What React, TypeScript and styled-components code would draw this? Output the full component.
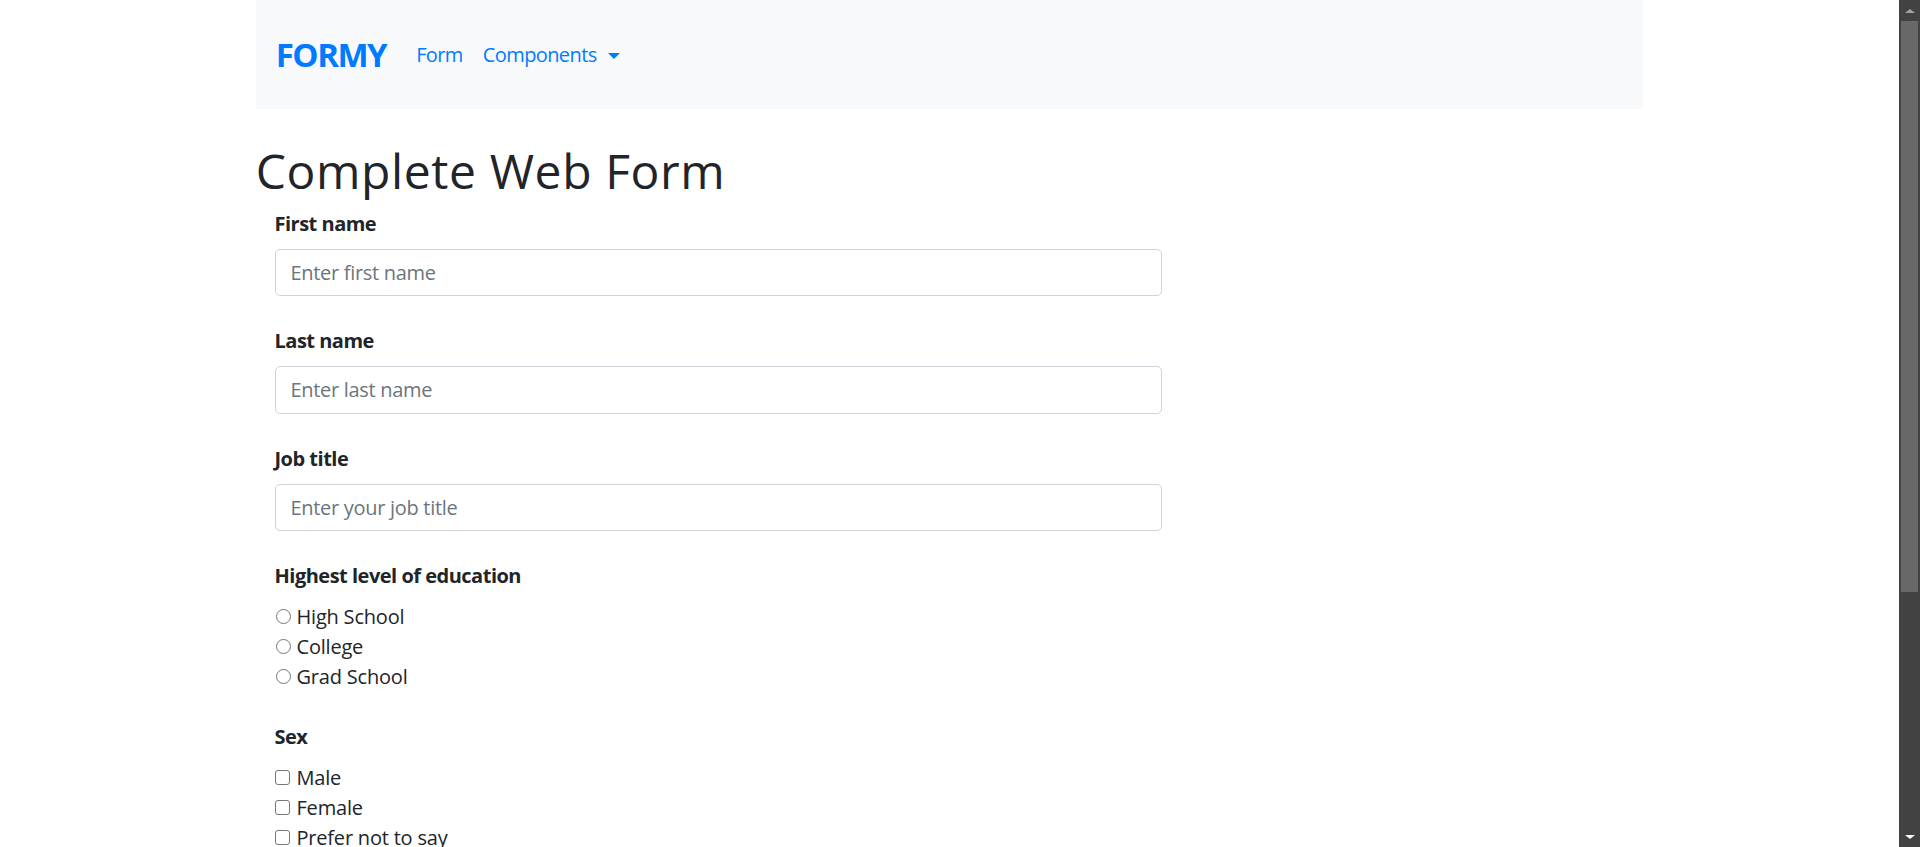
import React from 'react';
import styled, { createGlobalStyle } from 'styled-components';

const GlobalStyle = createGlobalStyle`
  body {
    margin: 0;
    font-family: "Open Sans", "Noto Sans", sans-serif;
    color: #212529;
    background: #fff;
  }
  *, *::before, *::after { box-sizing: border-box; }
  ::-webkit-scrollbar { width: 0; height: 0; }
`;

const Page = styled.div`
  margin-right: 21px;
`;

const Container = styled.div`
  max-width: 1425px;
  margin: 0 auto;
  padding: 0 18.75px 25px;
`;

const Navbar = styled.nav`
  display: flex;
  align-items: center;
  height: 109px;
  padding: 0 20px;
  background: #f8f9fa;
`;

const Brand = styled.a`
  font-size: 33px;
  font-weight: 700;
  letter-spacing: -1.5px;
  color: #007bff;
  line-height: 1.5;
  margin-right: 20px;
  text-decoration: none;
`;

const NavLink = styled.a`
  display: inline-flex;
  align-items: center;
  font-size: 20px;
  line-height: 30px;
  letter-spacing: -0.6px;
  padding: 0 10px;
  color: #007bff;
  text-decoration: none;
`;

const Caret = styled.span`
  display: inline-block;
  margin-left: 11px;
  margin-top: 2px;
  border-top: 6px solid #007bff;
  border-left: 6px solid transparent;
  border-right: 6px solid transparent;
`;

const Title = styled.h1`
  font-size: 48px;
  font-weight: 400;
  letter-spacing: 0.6px;
  line-height: 1.2;
  margin: 33px 0 9px;
`;

const Form = styled.form`
  width: 925px;
  padding: 0 18.75px;
`;

const Group = styled.div`
  margin-bottom: 30px;
`;

const Label = styled.label`
  display: block;
  font-size: 20px;
  font-weight: 700;
  letter-spacing: -0.5px;
  line-height: 30px;
  margin-bottom: 10px;
`;

const TextInput = styled.input`
  display: block;
  width: 100%;
  height: 47.5px;
  padding: 0 15px;
  font-family: inherit;
  font-size: 20px;
  letter-spacing: -0.3px;
  color: #495057;
  background: #fff;
  border: 1px solid #ced4da;
  border-radius: 5px;
  outline: none;
  &::placeholder { color: #6c757d; opacity: 1; }
`;

const Select = styled.select`
  display: block;
  width: 100%;
  height: 47.5px;
  padding: 0 15px;
  font-family: inherit;
  font-size: 20px;
  color: #495057;
  background: #fff;
  border: 1px solid #ced4da;
  border-radius: 5px;
`;

const OptionList = styled.div`
  padding-top: 1px;
`;

const Option = styled.label`
  display: flex;
  align-items: center;
  font-size: 20px;
  letter-spacing: -0.2px;
  line-height: 30px;
`;

const Radio = styled.input.attrs({ type: 'radio' })`
  appearance: none;
  flex: none;
  width: 15px;
  height: 15px;
  margin: -2px 6px 0 1px;
  border: 1px solid #767676;
  border-radius: 50%;
  background: #fff;
`;

const Checkbox = styled.input.attrs({ type: 'checkbox' })`
  appearance: none;
  flex: none;
  width: 15px;
  height: 15px;
  margin: -2px 7px 0 0;
  border: 1px solid #767676;
  border-radius: 3px;
  background: #fff;
`;

const SubmitButton = styled.a`
  display: inline-block;
  padding: 10px 20px;
  font-size: 25px;
  line-height: 1.5;
  color: #fff;
  background: #007bff;
  border: 1px solid #007bff;
  border-radius: 6px;
  text-decoration: none;
`;

const Scrollbar = styled.div`
  position: fixed;
  top: 0;
  right: 0;
  width: 21px;
  height: 100vh;
  background: #424242;
  display: flex;
  flex-direction: column;
  align-items: center;
`;

const ScrollArrow = styled.div<{ $down?: boolean }>`
  flex: none;
  width: 21px;
  height: 21px;
  display: flex;
  align-items: center;
  justify-content: center;
  margin-top: ${(p) => (p.$down ? 'auto' : '0')};
  &::before {
    content: '';
    border-left: 5px solid transparent;
    border-right: 5px solid transparent;
    ${(p) =>
      p.$down
        ? 'border-top: 4px solid #ffffff;'
        : 'border-bottom: 4px solid #a3a3a3;'}
  }
`;

const Thumb = styled.div`
  flex: none;
  width: 17px;
  height: 571px;
  background: #686868;
`;

const education = ['High School', 'College', 'Grad School'];
const sexes = ['Male', 'Female', 'Prefer not to say'];

export default function App() {
  return (
    <>
      <GlobalStyle />
      <Page>
        <Container>
          <Navbar>
            <Brand href="#">FORMY</Brand>
            <NavLink href="#">Form</NavLink>
            <NavLink href="#">
              Components
              <Caret />
            </NavLink>
          </Navbar>
          <Title>Complete Web Form</Title>
          <Form>
            <Group>
              <Label htmlFor="first-name">First name</Label>
              <TextInput id="first-name" placeholder="Enter first name" />
            </Group>
            <Group>
              <Label htmlFor="last-name">Last name</Label>
              <TextInput id="last-name" placeholder="Enter last name" />
            </Group>
            <Group>
              <Label htmlFor="job-title">Job title</Label>
              <TextInput id="job-title" placeholder="Enter your job title" />
            </Group>
            <Group>
              <Label as="div">Highest level of education</Label>
              <OptionList>
                {education.map((e) => (
                  <Option key={e}>
                    <Radio name="education" />
                    {e}
                  </Option>
                ))}
              </OptionList>
            </Group>
            <Group>
              <Label as="div">Sex</Label>
              <OptionList>
                {sexes.map((s) => (
                  <Option key={s}>
                    <Checkbox />
                    {s}
                  </Option>
                ))}
              </OptionList>
            </Group>
            <Group>
              <Label htmlFor="select-menu">Years of experience:</Label>
              <Select id="select-menu" defaultValue="0">
                <option value="0">Select an option</option>
                <option value="1">0-1</option>
                <option value="2">2-4</option>
                <option value="3">5-9</option>
                <option value="4">10+</option>
              </Select>
            </Group>
            <Group>
              <Label htmlFor="datepicker">Date</Label>
              <TextInput id="datepicker" placeholder="mm/dd/yyyy" />
            </Group>
            <Group>
              <SubmitButton href="#">Submit</SubmitButton>
            </Group>
          </Form>
        </Container>
      </Page>
      <Scrollbar aria-hidden="true">
        <ScrollArrow />
        <Thumb />
        <ScrollArrow $down />
      </Scrollbar>
    </>
  );
}
